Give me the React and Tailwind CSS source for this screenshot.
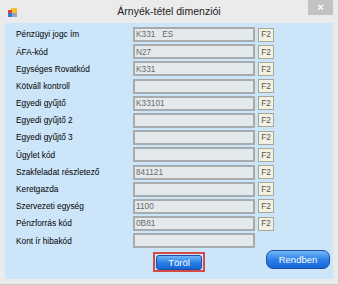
import React from "react";

const rows = [
  { label: "Pénzügyi jogc ím", value: "K331   ES", f2: true },
  { label: "ÁFA-kód", value: "N27", f2: true },
  { label: "Egységes Rovatkód", value: "K331", f2: true },
  { label: "Kötváll kontroll", value: "", f2: true },
  { label: "Egyedi gyűjtő", value: "K33101", f2: true },
  { label: "Egyedi gyűjtő 2", value: "", f2: true },
  { label: "Egyedi gyűjtő 3", value: "", f2: true },
  { label: "Ügylet kód", value: "", f2: true },
  { label: "Szakfeladat részletező", value: "841121", f2: true },
  { label: "Keretgazda", value: "", f2: true },
  { label: "Szervezeti egység", value: "1100", f2: true },
  { label: "Pénzforrás kód", value: "0B81", f2: true },
  { label: "Kont ír hibakód", value: "", f2: false },
];

function AppIcon() {
  return (
    <svg width="9" height="9" viewBox="0 0 9 9">
      <rect x="3" y="0" width="6" height="5" fill="#f2c230" />
      <rect x="0" y="2" width="4" height="3" fill="#e0403a" />
      <rect x="0" y="5" width="4" height="4" fill="#3a78d8" />
      <rect x="4" y="5" width="5" height="4" fill="#9aa6b8" />
    </svg>
  );
}

function Row({ label, value, f2 }) {
  return (
    <div className="flex items-center h-[15px]">
      <div className="w-[128px] pl-[11px] text-[8.3px] text-black leading-none">
        {label}
      </div>
      <div className="w-[122px] h-[15px] bg-[#e4e9eb] border-2 border-[#a7abad] flex items-center pl-[1px] text-[8.3px] text-[#6a6a6a] leading-none whitespace-pre">
        {value}
      </div>
      {f2 && (
        <div className="ml-[3px] w-[16px] h-[14px] bg-[#f3f1df] border border-[#a6a69a] flex items-center justify-center text-[8.3px] text-[#555] leading-none">
          F2
        </div>
      )}
    </div>
  );
}

export default function App() {
  return (
    <div
      className="w-[339px] h-[285px] bg-[#ebebeb] border-r border-b border-[#c9c9c9] flex flex-col overflow-hidden"
      style={{ fontFamily: '"Liberation Sans", Arial, sans-serif' }}
    >
      <div className="relative h-[23px] flex items-center shrink-0">
        <div className="ml-[8px] mt-[1px]">
          <AppIcon />
        </div>
        <div className="flex-1 text-center text-[10.5px] text-[#222] -ml-[17px]">
          Árnyék-tétel dimenziói
        </div>
        <div className="absolute right-[5px] top-0 w-[25px] h-[15px] bg-[#c2c2c2] flex items-center justify-center text-white text-[11px] font-bold leading-none">
          ×
        </div>
      </div>
      <div className="mx-[5px] w-[328px] h-[256px] bg-[#cde5f9] flex flex-col pt-[4px]">
        <div className="flex flex-col gap-y-[2.2px]">
          {rows.map((r) => (
            <Row key={r.label} {...r} />
          ))}
        </div>
        <div className="flex items-start">
          <div className="ml-[148px] mt-[4px] w-[52px] h-[20px] border-2 border-[#d44a4a] flex items-center justify-center">
            <div className="w-[46px] h-[15px] rounded-[3px] border border-[#1d4fa0] bg-gradient-to-b from-[#6fb6f7] via-[#2a7fe6] to-[#1566d6] flex items-center justify-center text-white text-[9.5px] leading-none">
              Töröl
            </div>
          </div>
          <div className="ml-[61px] mt-[2px] w-[64px] h-[19px] rounded-[7px] border border-[#1a4fa5] bg-gradient-to-b from-[#72b8f8] via-[#2d82e8] to-[#1566d6] flex items-center justify-center text-white text-[9.5px] leading-none">
            Rendben
          </div>
        </div>
      </div>
    </div>
  );
}
